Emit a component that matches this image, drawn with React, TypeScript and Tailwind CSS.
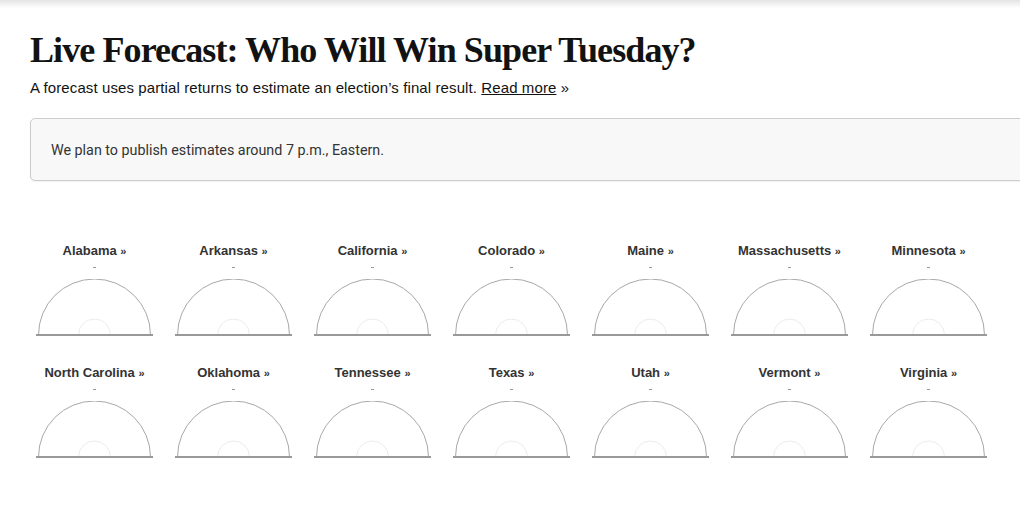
import React from "react";

const row1 = ["Alabama", "Arkansas", "California", "Colorado", "Maine", "Massachusetts", "Minnesota"];
const row2 = ["North Carolina", "Oklahoma", "Tennessee", "Texas", "Utah", "Vermont", "Virginia"];

function Gauge({ name }: { name: string }) {
  return (
    <div className="flex flex-col items-center">
      <div className="text-[13px] leading-[16px] font-bold text-[#333] whitespace-nowrap" style={{ fontFamily: '"Liberation Sans", Arial, sans-serif' }}>
        {name} <span className="text-[11px]">»</span>
      </div>
      <div className="h-[1px] w-[3px] bg-[#999] mt-[8px]" />
      <svg width="117" height="58" viewBox="0 0 117 58" className="mt-[11px]">
        <path d="M 2.5 56 A 56 56 0 0 1 114.5 56" fill="none" stroke="#a8a8a8" strokeWidth="1" />
        <path d="M 42.5 56 A 16 16 0 0 1 74.5 56" fill="none" stroke="#ececec" strokeWidth="1" />
        <line x1="0" y1="56" x2="117" y2="56" stroke="#999" strokeWidth="2" />
      </svg>
    </div>
  );
}

export default function App() {
  return (
    <div className="w-[1020px] h-[531px] overflow-hidden bg-white relative">
      <div className="h-[8px] bg-gradient-to-b from-[#e4e4e4] to-white" />
      <div className="pl-[30px]">
        <h1
          className="text-[36px] leading-[44px] font-bold text-[#121212] tracking-[-0.9px] mt-[20px]"
          style={{ fontFamily: '"Liberation Serif", "Times New Roman", serif' }}
        >
          Live Forecast: Who Will Win Super Tuesday?
        </h1>
        <p className="text-[15px] leading-[20px] text-[#121212] tracking-[0.1px] mt-[6px]" style={{ fontFamily: '"Liberation Sans", Arial, sans-serif' }}>
          A forecast uses partial returns to estimate an election’s final result.{" "}
          <span className="underline">Read more</span> »
        </p>
        <div className="mt-[20px] w-[1020px] h-[63px] border border-[#ccc] rounded-[5px] bg-[#f8f8f8] flex items-center pl-[20px] pt-[3px] shadow-[0_1px_2px_rgba(0,0,0,0.06)]">
          <span className="text-[14.3px] text-[#333]" style={{ fontFamily: 'Roboto, "Liberation Sans", sans-serif' }}>
            We plan to publish estimates around 7 p.m., Eastern.
          </span>
        </div>
      </div>
      <div className="ml-[25px] mt-[62px] grid grid-cols-[repeat(7,139px)] gap-y-[28px]">
        {row1.map((n) => (
          <Gauge key={n} name={n} />
        ))}
        {row2.map((n) => (
          <Gauge key={n} name={n} />
        ))}
      </div>
    </div>
  );
}
